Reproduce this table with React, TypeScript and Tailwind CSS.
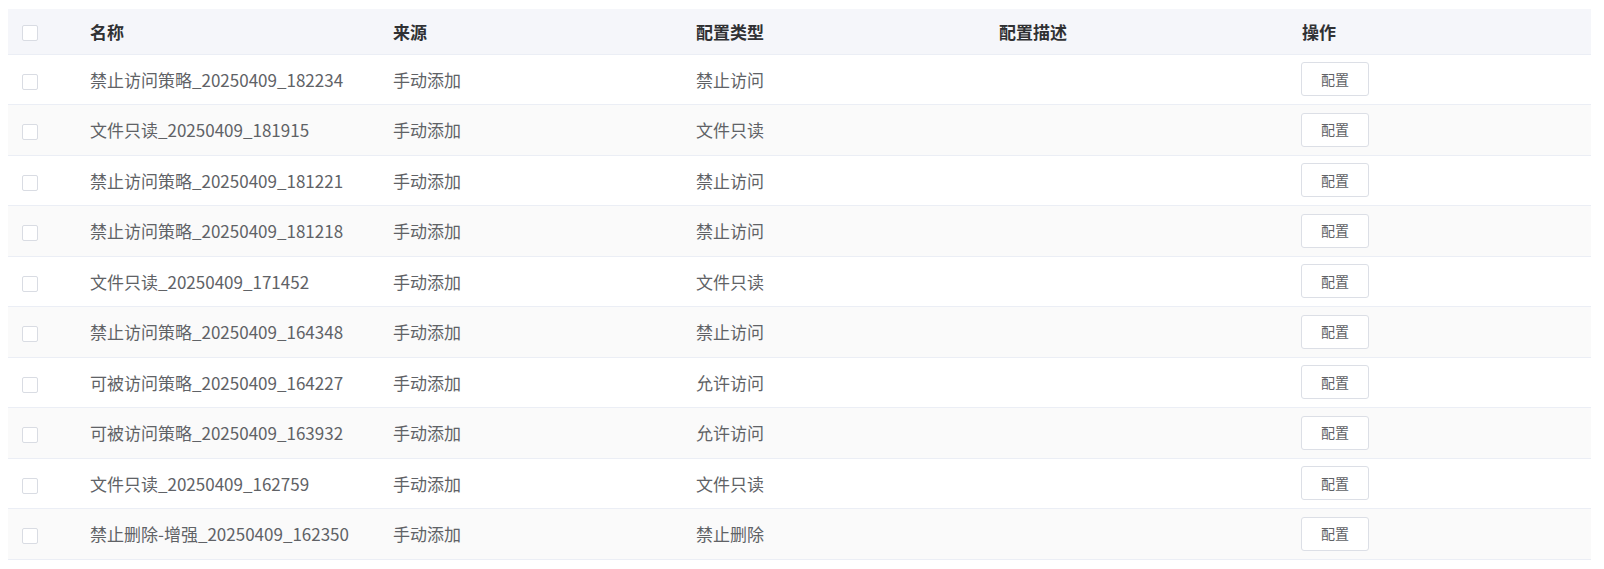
const rows = [
  { name: '禁止访问策略_20250409_182234', type: '禁止访问' },
  { name: '文件只读_20250409_181915', type: '文件只读' },
  { name: '禁止访问策略_20250409_181221', type: '禁止访问' },
  { name: '禁止访问策略_20250409_181218', type: '禁止访问' },
  { name: '文件只读_20250409_171452', type: '文件只读' },
  { name: '禁止访问策略_20250409_164348', type: '禁止访问' },
  { name: '可被访问策略_20250409_164227', type: '允许访问' },
  { name: '可被访问策略_20250409_163932', type: '允许访问' },
  { name: '文件只读_20250409_162759', type: '文件只读' },
  { name: '禁止删除-增强_20250409_162350', type: '禁止删除' },
];

function Checkbox() {
  return <span className="block w-4 h-4 rounded-[2px] border border-[#d9dce3] bg-white" />;
}

export default function App() {
  return (
    <div
      className="min-h-screen bg-white pl-2 pt-[9px] pr-[14px]"
      style={{ fontFamily: '"Noto Sans CJK SC", "Noto Sans", sans-serif' }}
    >
      <table className="w-[1583px] table-fixed border-collapse text-[17px]">
        <colgroup>
          <col className="w-[73px]" />
          <col className="w-[303px]" />
          <col className="w-[303px]" />
          <col className="w-[303px]" />
          <col className="w-[303px]" />
          <col />
        </colgroup>
        <thead>
          <tr className="h-[45px] bg-[#f5f6fa] border-b border-[#ebeef5] text-[#303133]">
            <th className="pl-[14px] pt-[3px] text-left font-normal">
              <Checkbox />
            </th>
            <th className="pl-[9px] text-left font-bold">名称</th>
            <th className="pl-[9px] text-left font-bold">来源</th>
            <th className="pl-[9px] text-left font-bold">配置类型</th>
            <th className="pl-[9px] text-left font-bold">配置描述</th>
            <th className="pl-[9px] text-left font-bold">操作</th>
          </tr>
        </thead>
        <tbody>
          {rows.map((r, i) => (
            <tr
              key={r.name}
              className={`h-[50.5px] border-b border-[#ebeef5] text-[#606266] ${i % 2 === 1 ? 'bg-[#fafafa]' : 'bg-white'}`}
            >
              <td className="pl-[14px] pt-[5px]">
                <Checkbox />
              </td>
              <td className="pl-[9px] whitespace-nowrap">{r.name}</td>
              <td className="pl-[9px]">手动添加</td>
              <td className="pl-[9px]">{r.type}</td>
              <td className="pl-[9px]"></td>
              <td className="pl-[8px]">
                <button className="w-[68px] h-[34px] rounded-[3px] border border-[#dcdfe6] bg-white text-[14px] text-[#606266]">
                  配置
                </button>
              </td>
            </tr>
          ))}
        </tbody>
      </table>
    </div>
  );
}
